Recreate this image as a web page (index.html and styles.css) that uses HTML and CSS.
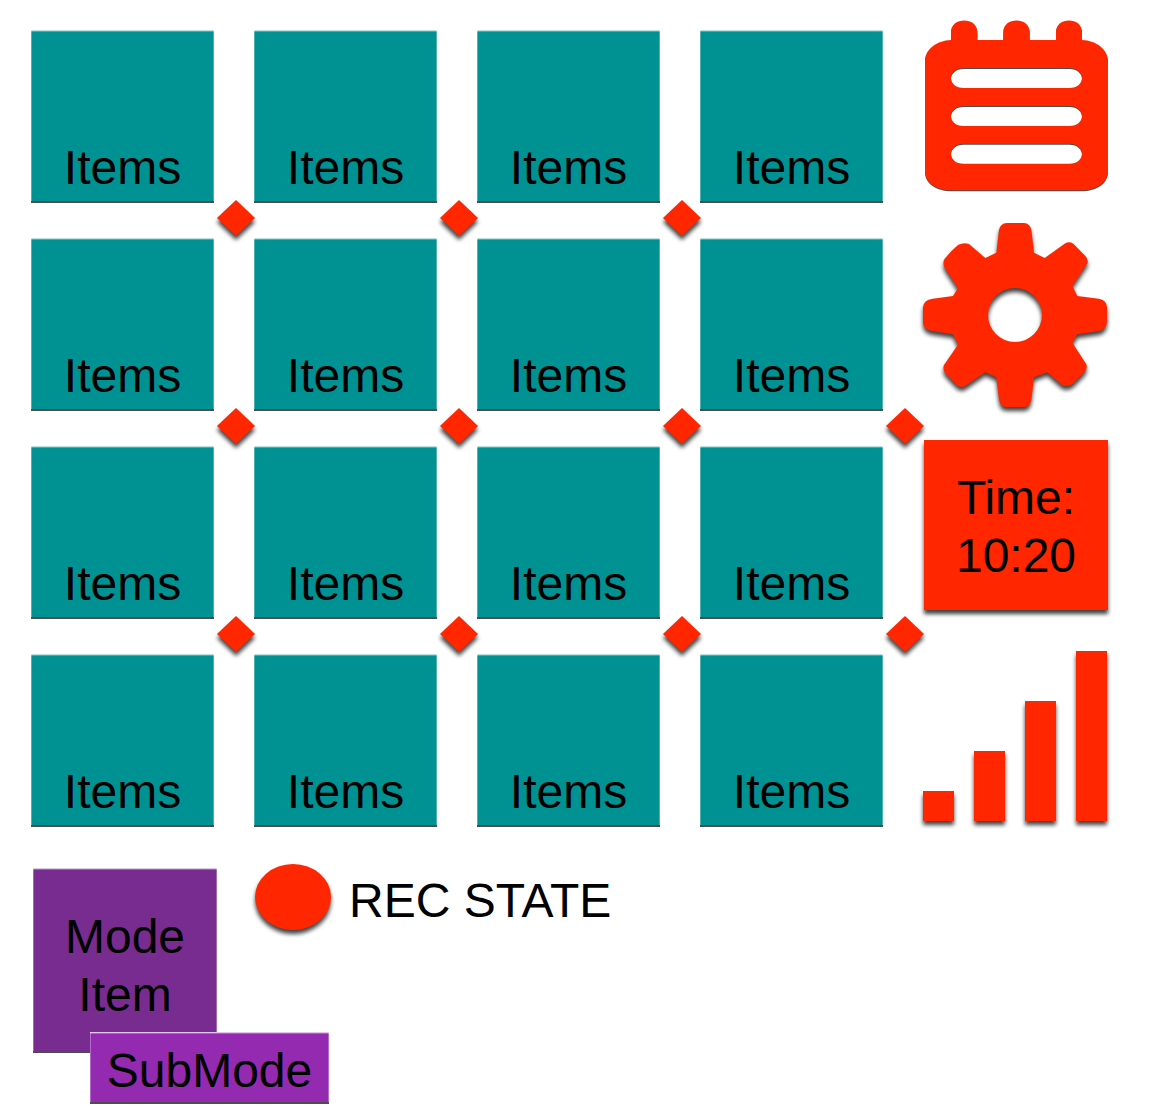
FILE: index.html
```html
<!DOCTYPE html>
<html lang="en">
<head>
<meta charset="utf-8">
<meta name="viewport" content="width=device-width, initial-scale=1">
<title>Items</title>
<link rel="stylesheet" href="styles.css">
</head>
<body>
<svg class="defs" aria-hidden="true">
  <symbol id="diamond" viewBox="0 0 38 36"><path d="M19 0L38 18L19 36L0 18Z"/></symbol>
</svg>
<main class="page">
  <div class="top">
    <ul class="board">
      <li class="cell"><button class="tile">Items</button><svg class="node"><use href="#diamond"/></svg></li>
      <li class="cell"><button class="tile">Items</button><svg class="node"><use href="#diamond"/></svg></li>
      <li class="cell"><button class="tile">Items</button><svg class="node"><use href="#diamond"/></svg></li>
      <li class="cell"><button class="tile">Items</button></li>
      <li class="cell"><button class="tile">Items</button><svg class="node"><use href="#diamond"/></svg></li>
      <li class="cell"><button class="tile">Items</button><svg class="node"><use href="#diamond"/></svg></li>
      <li class="cell"><button class="tile">Items</button><svg class="node"><use href="#diamond"/></svg></li>
      <li class="cell"><button class="tile">Items</button><svg class="node"><use href="#diamond"/></svg></li>
      <li class="cell"><button class="tile">Items</button><svg class="node"><use href="#diamond"/></svg></li>
      <li class="cell"><button class="tile">Items</button><svg class="node"><use href="#diamond"/></svg></li>
      <li class="cell"><button class="tile">Items</button><svg class="node"><use href="#diamond"/></svg></li>
      <li class="cell"><button class="tile">Items</button><svg class="node"><use href="#diamond"/></svg></li>
      <li class="cell"><button class="tile">Items</button></li>
      <li class="cell"><button class="tile">Items</button></li>
      <li class="cell"><button class="tile">Items</button></li>
      <li class="cell"><button class="tile">Items</button></li>
    </ul>
    <aside class="side">
      <button class="icon-button" aria-label="Calendar">
        <svg class="icon icon-flat" viewBox="72 60 552 516">
          <path fill-rule="evenodd" d="M153 120V96C153 50 232 50 232 96V120H310V96C310 50 389 50 389 96V120H468V96C468 50 546 50 546 96V120C590 122 624 148 624 184V514C624 548 590 571 544 571H155C109 571 75 548 75 514V184C75 148 109 122 153 120Z
            M192 204C140 204 140 264 192 264H507C559 264 559 204 507 204Z
            M192 318C140 318 140 378 192 378H507C559 378 559 318 507 318Z
            M192 431C140 431 140 491 192 491H507C559 491 559 431 507 431Z"/>
        </svg>
      </button>
      <button class="icon-button" aria-label="Settings">
        <svg class="icon" viewBox="72 39 552 558">
          <path fill-rule="evenodd" d="M289 128L297 60Q301 40 320 39H372Q390 40 394 60L402 128L434 144L496 100Q508 93 520 101L556 138Q566 148 562 160L517 227L532 258L596 266Q620 270 621 292V335Q620 356 598 363L532 373L517 398L559 463Q563 474 554 486L519 521Q502 533 486 525L442 487L402 502L394 568Q390 590 374 591H318Q300 590 297 568L289 502L256 487L197 527Q184 535 171 526L136 490Q127 478 132 465L174 404L159 373L95 363Q70 356 69 338V292Q70 270 98 266L159 258L174 235L133 172Q127 156 134 146Q155 120 175 104Q192 96 207 102L256 144Z
            M264 315A81 81 0 0 0 426 315A81 81 0 0 0 264 315Z"/>
        </svg>
      </button>
      <div class="clock">Time:<br>10:20</div>
      <svg class="icon" viewBox="72 3 552 543" role="img" aria-label="Signal">
        <path d="M69 453H162V543H69ZM222 333H315V543H222ZM375 183H468V543H375ZM528 33H621V543H528Z"/>
      </svg>
    </aside>
  </div>
  <div class="bottom">
    <div class="modes">
      <button class="mode">Mode<br>Item</button>
      <button class="submode">SubMode</button>
    </div>
    <div class="rec"><span class="rec-dot"></span>REC STATE</div>
  </div>
</main>
</body>
</html>
```
FILE: styles.css
```css
:root {
  --red: #ff2600;
  --teal: #009193;
  --shadow: 0 4px 4px rgba(0, 0, 0, 0.75);
}

* {
  box-sizing: border-box;
}

body {
  margin: 0;
  background: #fff;
  color: #000;
  font: 48px/58px "Liberation Sans", Arial, sans-serif;
}

button {
  border: 0;
  padding: 0;
  background: none;
  color: inherit;
  font: inherit;
  cursor: pointer;
}

.defs {
  display: none;
}

.page {
  padding: 20px 56px 12px 31px;
}

.top {
  display: flex;
  gap: 41px;
}

.board {
  flex: 1;
  display: grid;
  grid-template-columns: repeat(4, 1fr);
  gap: 35px 40px;
  align-content: start;
  margin: 0;
  padding: 10px 0 0;
  list-style: none;
}

.cell {
  position: relative;
}

.tile,
.mode,
.submode {
  display: block;
  box-shadow: inset 0 1px rgba(255, 255, 255, 0.65), inset 0 2px rgba(255, 255, 255, 0.25),
    inset 0 -2px #4d4d4d, inset 1px 0 rgba(255, 255, 255, 0.3), inset -1px 0 rgba(255, 255, 255, 0.3);
}

.tile {
  width: 100%;
  padding: 109px 0 6px;
  background: var(--teal);
}

.node {
  position: absolute;
  right: -41px;
  bottom: -33px;
  width: 38px;
  height: 36px;
  fill: var(--red);
  overflow: visible;
  filter: drop-shadow(0 4px 2px rgba(0, 0, 0, 0.75));
}

.side {
  flex: 0 0 184px;
  display: flex;
  flex-direction: column;
  gap: 31px;
}

.icon {
  display: block;
  width: 100%;
  fill: var(--red);
  overflow: visible;
  filter: drop-shadow(0 4px 2px rgba(0, 0, 0, 0.75));
}

.icon-flat {
  filter: drop-shadow(0 1px 0 #4d4d4d);
}

.clock {
  padding: 29px 0 25px;
  background: var(--red);
  box-shadow: var(--shadow);
  text-align: center;
}

.bottom {
  display: flex;
  align-items: flex-start;
  gap: 38px;
  margin-top: 37px;
  padding-left: 2px;
}

.modes {
  position: relative;
  padding: 4px 0 51px;
}

.mode {
  width: 184px;
  padding: 40px 0 29px;
  background: #782c90;
}

.submode {
  position: absolute;
  left: 57px;
  bottom: 0;
  width: 239px;
  padding: 10px 0 4px;
  background: #932ab0;
}

.rec {
  display: flex;
  align-items: flex-end;
  gap: 18px;
}

.rec-dot {
  width: 76px;
  height: 66px;
  border-radius: 50%;
  background: var(--red);
  box-shadow: var(--shadow);
}
```
